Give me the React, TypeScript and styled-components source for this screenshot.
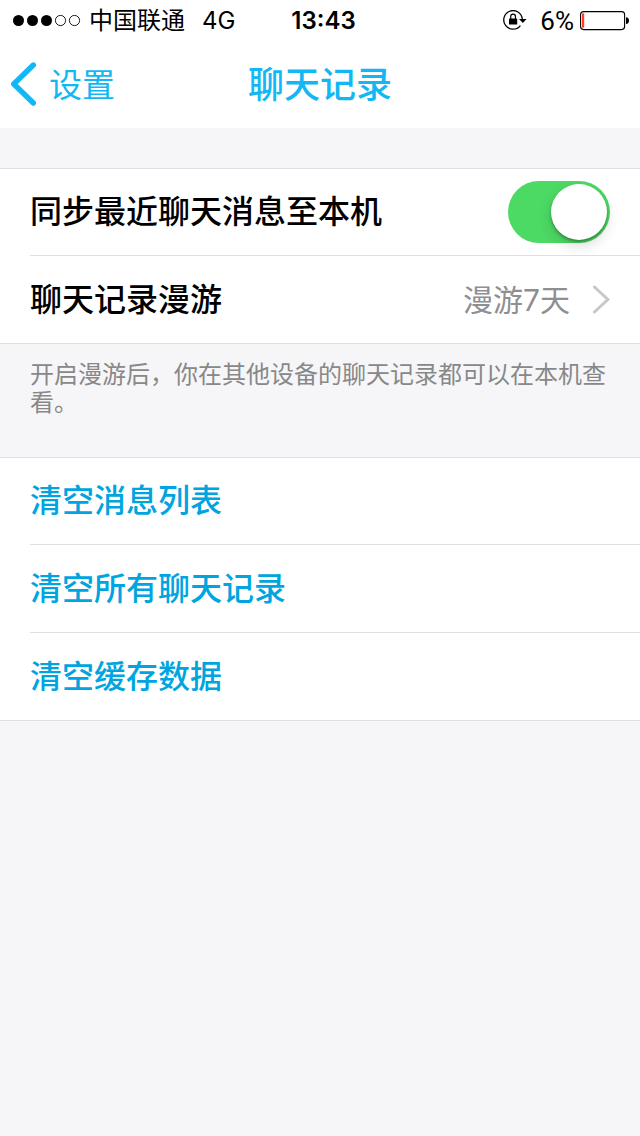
import React, { useState } from "react";
import styled, { createGlobalStyle } from "styled-components";

const GlobalStyle = createGlobalStyle`
  * { box-sizing: border-box; }
  body {
    margin: 0;
    background: #f6f6f9;
    color: #000;
    font-family: Inter, "Noto Sans CJK SC", sans-serif;
    -webkit-font-smoothing: antialiased;
  }
  button {
    border: 0;
    padding: 0;
    background: none;
    color: inherit;
    font: inherit;
    text-align: left;
    cursor: pointer;
  }
`;

const Page = styled.div`
  min-height: 100vh;
`;

const StatusBar = styled.div`
  display: grid;
  grid-template-columns: 1fr auto 1fr;
  align-items: center;
  height: 40px;
  padding: 2px 11px 0 12px;
  background: #fff;
  font-size: 24px;
  line-height: 38px;
`;

const StatusLeft = styled.div`
  display: flex;
  align-items: center;
  white-space: nowrap;
`;

const Signal = styled.svg`
  display: block;
  margin-right: 8px;
`;

const Network = styled.span`
  margin-left: 17px;
`;

const Time = styled.time`
  padding-left: 6px;
  font-weight: 600;
`;

const StatusRight = styled.div`
  display: flex;
  align-items: center;
  justify-content: flex-end;
`;

const LockIcon = styled.svg`
  display: block;
  margin-right: 13px;
`;

const Percent = styled.span`
  font-family: Roboto, sans-serif;
  font-size: 26px;
`;

const Battery = styled.svg`
  display: block;
  margin-left: 6px;
`;

const NavBar = styled.header`
  display: grid;
  grid-template-columns: 1fr auto 1fr;
  align-items: center;
  height: 88px;
  padding: 0 10px;
  background: #fff;
  color: #12b7f5;
`;

const BackButton = styled.button`
  display: flex;
  align-items: center;
  gap: 12px;
  justify-self: start;

  && {
    font-size: 33px;
    line-height: 48px;
  }
`;

const BackLabel = styled.span`
  padding-top: 2px;
`;

const Title = styled.h1`
  margin: 0;
  padding-top: 2px;
  font-size: 36px;
  line-height: 48px;
  font-weight: 500;
`;

const Main = styled.main`
  padding-top: 40px;
`;

const Group = styled.ul`
  margin: 0;
  padding: 0 0 0 30px;
  list-style: none;
  background: #fff;
  border-top: 1px solid #dedfe0;
  border-bottom: 1px solid #dedfe0;
`;

const Item = styled.li`
  & + & {
    border-top: 1px solid #dedfe0;
  }
`;

const rowStyles = `
  display: flex;
  align-items: center;
  justify-content: space-between;
  width: 100%;
  min-height: 87px;
  padding-right: 30px;
  font-size: 32px;
  line-height: 48px;
  font-weight: 500;
`;

const SwitchRow = styled.label`
  ${rowStyles}
  min-height: 86px;
`;

const RowButton = styled.button<{ $action?: boolean }>`
  && {
    ${rowStyles}
    color: ${(p) => (p.$action ? "#00a5e0" : "#000")};
  }

  ${Item}:first-child && {
    min-height: 86px;
  }
`;

const RowValue = styled.span`
  display: flex;
  align-items: center;
  gap: 22px;
  color: #8e8e93;
  font-size: 30px;
  font-weight: 400;
`;

const Switch = styled.input`
  appearance: none;
  display: flex;
  align-items: center;
  justify-content: ${(p) => (p.checked ? "flex-end" : "flex-start")};
  width: 102px;
  height: 62px;
  margin: 0;
  padding: 3px;
  border-radius: 31px;
  background: ${(p) => (p.checked ? "#4cd964" : "#e5e5ea")};
  cursor: pointer;

  &::before {
    content: "";
    width: 56px;
    height: 56px;
    border-radius: 50%;
    background: #fff;
    box-shadow: 0 6px 14px rgba(0, 0, 0, 0.14), 0 2px 3px rgba(0, 0, 0, 0.3);
  }
`;

const Note = styled.p`
  margin: 0;
  padding: 17px 30px 40px;
  color: #888;
  font-size: 24px;
  line-height: 28px;
  font-weight: 400;
`;

const actions = ["清空消息列表", "清空所有聊天记录", "清空缓存数据"];

export default function App() {
  const [sync, setSync] = useState(true);

  return (
    <Page>
      <GlobalStyle />
      <StatusBar>
        <StatusLeft>
          <Signal width="69" height="12" viewBox="0 0 69 12" aria-hidden="true">
            {[7, 21, 35].map((x) => (
              <circle key={x} cx={x - 0.5} cy="5.5" r="5.5" />
            ))}
            {[49, 63].map((x) => (
              <circle key={x} cx={x - 0.5} cy="5.5" r="5.1" fill="none" stroke="#000" strokeWidth="0.9" />
            ))}
          </Signal>
          <span>中国联通</span>
          <Network>4G</Network>
        </StatusLeft>
        <Time>13:43</Time>
        <StatusRight>
          <LockIcon width="24" height="22" viewBox="0 0 24 22" aria-hidden="true">
            <path d="M19.3 9A9.3 9.3 0 1 0 17.4 15.6" fill="none" stroke="#000" strokeWidth="1.3" />
            <path d="M16 9h7.6L19.8 13z" />
            <rect x="6" y="8.4" width="8.2" height="6.2" rx="0.6" />
            <path d="M7.7 9V6.8a2.4 2.6 0 0 1 4.8 0V9" fill="none" stroke="#000" strokeWidth="1.2" />
          </LockIcon>
          <Percent>6%</Percent>
          <Battery width="49" height="20" viewBox="0 0 49 20" aria-hidden="true">
            <rect x="0.6" y="0.6" width="44" height="18" rx="3" fill="none" stroke="#000" strokeWidth="1.1" />
            <rect x="2" y="2.3" width="2.2" height="14.5" rx="0.8" fill="#ff3b30" />
            <path d="M46 6.2c2 0 3 1.3 3 3.4s-1 3.4-3 3.4z" />
          </Battery>
        </StatusRight>
      </StatusBar>

      <NavBar>
        <BackButton type="button">
          <svg width="27" height="46" viewBox="0 0 27 46" aria-hidden="true">
            <path d="M23.3 4 3.8 23 23.3 42" fill="none" stroke="#12b7f5" strokeWidth="5.4" strokeLinecap="round" strokeLinejoin="round" />
          </svg>
          <BackLabel>设置</BackLabel>
        </BackButton>
        <Title>聊天记录</Title>
      </NavBar>

      <Main>
        <Group>
          <Item>
            <SwitchRow>
              同步最近聊天消息至本机
              <Switch type="checkbox" checked={sync} onChange={(e) => setSync(e.target.checked)} />
            </SwitchRow>
          </Item>
          <Item>
            <RowButton type="button">
              聊天记录漫游
              <RowValue>
                漫游7天
                <svg width="18" height="30" viewBox="0 0 18 30" aria-hidden="true">
                  <path d="M2.5 2 15.8 14.5 2.5 27" fill="none" stroke="#c7c7cc" strokeWidth="3" strokeLinecap="round" />
                </svg>
              </RowValue>
            </RowButton>
          </Item>
        </Group>
        <Note>开启漫游后，你在其他设备的聊天记录都可以在本机查看。</Note>
        <Group>
          {actions.map((name) => (
            <Item key={name}>
              <RowButton type="button" $action>
                {name}
              </RowButton>
            </Item>
          ))}
        </Group>
      </Main>
    </Page>
  );
}
